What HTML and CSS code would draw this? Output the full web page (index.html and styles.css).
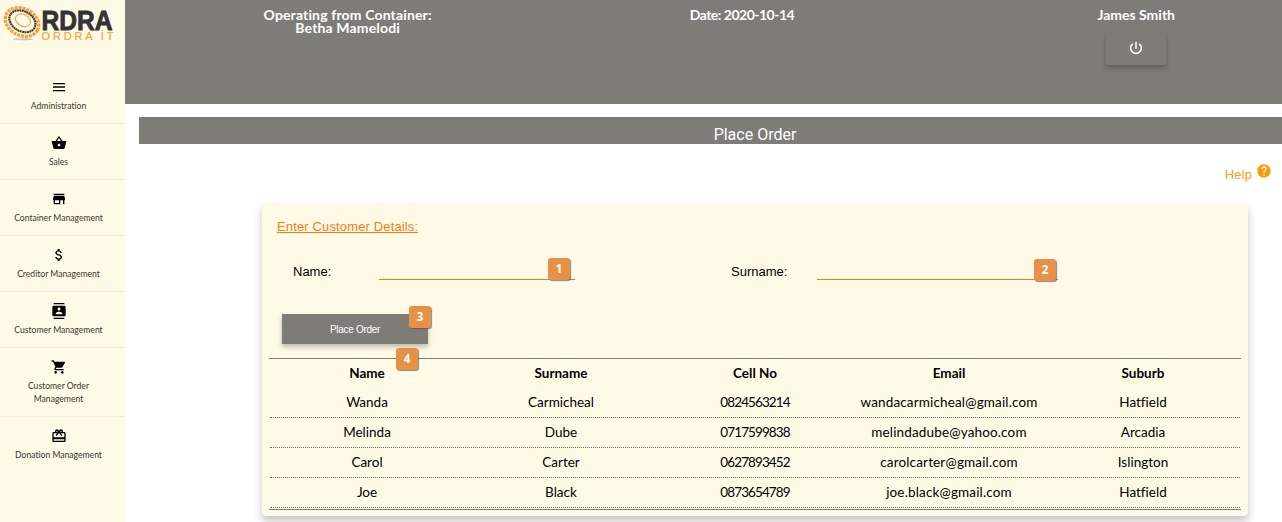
FILE: index.html
```html
<!DOCTYPE html>
<html lang="en">
<head>
<meta charset="utf-8">
<title>Ordra IT - Place Order</title>
<link rel="stylesheet" href="styles.css">
</head>
<body>
<div class="app">
  <aside class="sidebar">
    <svg class="logo" viewBox="0 0 125 68" width="125" height="68">
      <ellipse cx="23" cy="39.300" rx="10" ry="1" fill="#777" opacity=".4"/>
      <g fill="none" transform="rotate(28 22 22)">
        <ellipse cx="22" cy="22" rx="17.500" ry="13.300" stroke="#f9a23c" stroke-width="3.400" stroke-dasharray="3 .9"/>
        <ellipse cx="22" cy="21.200" rx="13.800" ry="10" stroke="#4a453c" stroke-width="2.200" stroke-dasharray="2 .4"/>
        <ellipse cx="22" cy="20" rx="8" ry="5.800" stroke="#f9a84a" stroke-width="1.200"/>
      </g>
      <text class="logo-name" x="41.500" y="29.600" textLength="71" lengthAdjust="spacingAndGlyphs">RDRA</text>
      <text class="logo-sub" x="41.500" y="39.800" textLength="72">ORDRA İT</text>
    </svg>
    <nav>
      <a class="item"><svg class="icon" viewBox="0 0 16 16"><path d="M2 4h12v1.200H2zM2 7.200h12v1.600H2zM2 11h12v1.200H2z"/></svg><span>Administration</span></a>
      <a class="item"><svg class="icon" viewBox="0 0 24 24"><path d="M17.210 9l-4.380-6.560c-.19-.28-.51-.42-.83-.42-.32 0-.64.14-.83.43L6.790 9H2c-.55 0-1 .45-1 1 0 .09.010.18.040.27l2.540 9.270c.23.84 1 1.460 1.920 1.460h13c.92 0 1.690-.62 1.930-1.460l2.540-9.270L23 10c0-.55-.45-1-1-1h-4.790zM9 9l3-4.400L15 9H9zm3 8c-1.100 0-2-.9-2-2s.9-2 2-2 2 .9 2 2-.9 2-2 2z"/></svg><span>Sales</span></a>
      <a class="item"><svg class="icon" viewBox="0 0 24 24"><path d="M20 4H4v2h16V4zm1 10v-2l-1-5H4l-1 5v2h1v6h10v-6h4v6h2v-6h1zm-9 4H6v-4h6v4z"/></svg><span>Container Management</span></a>
      <a class="item"><svg class="icon" viewBox="0 0 24 24"><path d="M11.800 10.900c-2.270-.59-3-1.200-3-2.150 0-1.090 1.010-1.850 2.700-1.850 1.780 0 2.440.85 2.500 2.100h2.210c-.07-1.720-1.120-3.300-3.210-3.810V3h-3v2.160c-1.940.42-3.500 1.680-3.500 3.610 0 2.310 1.910 3.460 4.700 4.130 2.500.6 3 1.480 3 2.410 0 .69-.49 1.790-2.700 1.790-2.060 0-2.870-.92-2.980-2.100h-2.200c.12 2.190 1.760 3.420 3.680 3.830V21h3v-2.150c1.950-.37 3.500-1.500 3.500-3.550 0-2.840-2.430-3.810-4.700-4.400z"/></svg><span>Creditor Management</span></a>
      <a class="item"><svg class="icon" viewBox="0 0 24 24"><path d="M20 0H4v2h16V0zM4 24h16v-2H4v2zM20 4H4c-1.100 0-2 .9-2 2v12c0 1.100.9 2 2 2h16c1.100 0 2-.9 2-2V6c0-1.100-.9-2-2-2zm-8 2.750c1.240 0 2.250 1.010 2.250 2.250s-1.010 2.250-2.250 2.250S9.750 10.240 9.750 9 10.760 6.750 12 6.750zM17 17H7v-1.500c0-1.670 3.330-2.500 5-2.500s5 .83 5 2.500V17z"/></svg><span>Customer Management</span></a>
      <a class="item"><svg class="icon" viewBox="0 0 24 24"><path d="M7 18c-1.100 0-1.990.9-1.990 2S5.900 22 7 22s2-.9 2-2-.9-2-2-2zM1 2v2h2l3.600 7.590-1.350 2.450c-.16.28-.25.61-.25.960 0 1.100.9 2 2 2h12v-2H7.420c-.14 0-.25-.11-.25-.25l.03-.12.900-1.630h7.450c.75 0 1.410-.41 1.750-1.030l3.580-6.490c.08-.14.120-.31.120-.48 0-.55-.45-1-1-1H5.210l-.94-2H1zm16 16c-1.100 0-1.990.9-1.990 2s.89 2 1.990 2 2-.9 2-2-.9-2-2-2z"/></svg><span>Customer Order<br>Management</span></a>
      <a class="item"><svg class="icon" viewBox="0 0 24 24"><path d="M20 6h-2.180c.11-.31.180-.65.180-1 0-1.660-1.340-3-3-3-1.050 0-1.960.54-2.500 1.350l-.5.670-.5-.68C10.960 2.540 10.050 2 9 2 7.340 2 6 3.340 6 5c0 .35.070.69.180 1H4c-1.110 0-1.990.89-1.990 2L2 19c0 1.110.89 2 2 2h16c1.110 0 2-.89 2-2V8c0-1.110-.89-2-2-2zm-5-2c.55 0 1 .45 1 1s-.45 1-1 1-1-.45-1-1 .45-1 1-1zM9 4c.55 0 1 .45 1 1s-.45 1-1 1-1-.45-1-1 .45-1 1-1zm11 15H4v-2h16v2zm0-5H4V8h5.080L7 10.830 8.620 12 11 8.760l1-1.360 1 1.360L15.380 12 17 10.830 14.920 8H20v6z"/></svg><span>Donation Management</span></a>
    </nav>
  </aside>
  <div class="page">
    <header class="topbar">
      <div class="place">Operating from Container:<br>Betha Mamelodi</div>
      <div class="date">Date: 2020-10-14</div>
      <div class="user">James Smith
        <button class="power" aria-label="Log out"><svg viewBox="0 0 24 24" width="16" height="16"><path fill="#fff" stroke="#fff" stroke-width=".3" d="M13 3h-2v10h2V3zm4.830 2.170l-1.420 1.420C17.990 7.860 19 9.810 19 12c0 3.870-3.130 7-7 7s-7-3.130-7-7c0-2.190 1.010-4.140 2.580-5.420L6.170 5.170C4.230 6.820 3 9.260 3 12c0 4.970 4.030 9 9 9s9-4.030 9-9c0-2.740-1.230-5.180-3.170-6.830z"/></svg></button>
      </div>
    </header>
    <h1 class="title">Place Order</h1>
    <div class="help"><span>Help</span><svg viewBox="0 0 24 24" width="16" height="16"><path fill="#fb9b0a" d="M12 2C6.480 2 2 6.480 2 12s4.480 10 10 10 10-4.480 10-10S17.520 2 12 2zm1 17h-2v-2h2v2zm2.070-7.750l-.9.920C13.450 12.900 13 13.500 13 15h-2v-.5c0-1.100.45-2.100 1.170-2.830l1.240-1.260c.37-.36.590-.86.590-1.410 0-1.100-.9-2-2-2s-2 .9-2 2H8c0-2.210 1.790-4 4-4s4 1.790 4 4c0 .88-.36 1.680-.93 2.250z"/></svg></div>
    <main class="card">
      <h2 class="heading">Enter Customer Details:</h2>
      <div class="fields">
        <label class="label-name">Name:</label>
        <div class="line"><b class="badge badge-1">1</b></div>
        <label class="label-surname">Surname:</label>
        <div class="line"><b class="badge badge-2">2</b></div>
      </div>
      <button class="submit">Place Order<b class="badge badge-3">3</b></button>
      <div class="table">
        <b class="badge badge-4">4</b>
        <div class="row head"><span>Name</span><span>Surname</span><span>Cell No</span><span>Email</span><span>Suburb</span></div>
        <div class="row"><span>Wanda</span><span>Carmicheal</span><span class="cell">0824563214</span><span class="email">wandacarmicheal@gmail.com</span><span>Hatfield</span></div>
        <div class="row"><span>Melinda</span><span>Dube</span><span class="cell">0717599838</span><span class="email">melindadube@yahoo.com</span><span>Arcadia</span></div>
        <div class="row"><span>Carol</span><span>Carter</span><span class="cell">0627893452</span><span class="email">carolcarter@gmail.com</span><span>Islington</span></div>
        <div class="row"><span>Joe</span><span>Black</span><span class="cell">0873654789</span><span class="email">joe.black@gmail.com</span><span>Hatfield</span></div>
      </div>
    </main>
  </div>
</div>
</body>
</html>
```
FILE: styles.css
```css
* { box-sizing: border-box; }
body { margin: 0; background: #fff; overflow: hidden; font-family: Lato, sans-serif; font-variant-ligatures: none; }
.app { display: flex; height: 522px; }

.sidebar { width: 125px; flex: none; background: #fffae6; }
.logo { display: block; }
.logo-name { font: bold 28px "Liberation Sans", sans-serif; fill: #333; stroke: #333; stroke-width: .9px; }
.logo-sub { font: 11px "Liberation Sans", sans-serif; fill: #f9a23c; stroke: #f9a23c; stroke-width: .2px; }
.item { display: flex; flex-direction: column; align-items: center; gap: 5px; padding: 11px 8px 10px 0; border-bottom: 1px solid #f3ecdc; font-size: 8.600px; line-height: 13px; text-align: center; color: #383630; }
.item:last-child { border-bottom: 0; }
.icon { width: 16px; height: 16px; fill: #000; }

.page { flex: 1; min-width: 0; }
.topbar { display: grid; grid-template-columns: repeat(3, 394.3px); height: 104px; padding: 8px 0 0 25.500px; background: #7e7c77; overflow: hidden; color: #fff; font-weight: bold; font-size: 14px; line-height: 13px; text-align: center; }
.place { letter-spacing: .15px; }
.date { letter-spacing: -.5px; }
.user { display: flex; flex-direction: column; align-items: center; }
.power { width: 60px; height: 30px; margin-top: 14px; padding: 0 0 4px; border: 0; background: #7e7c77; box-shadow: 0 3px 5px rgba(0,0,0,.24); }
.power svg { display: block; margin: 0 auto; }
.title { height: 27px; margin: 13px 0 0 14px; padding: 4px 0 0 89px; background: #7e7c77; color: #fff; font: 16px/27px Roboto, sans-serif; text-align: center; }
.help { display: flex; justify-content: flex-end; gap: 4px; height: 60px; padding: 19px 10px 0 0; color: #fb9b1f; font: 13px/23px "Liberation Sans", sans-serif; letter-spacing: .1px; }

.card { width: 986px; height: 312px; margin-left: 137px; padding: 0 7px; border-radius: 4px; background: #fffae6; box-shadow: 0 5px 8px rgba(0,0,0,.24); }
.heading { margin: 0; padding: 14px 0 0 8px; color: #f57c13; font: 13px/17px "Liberation Sans", sans-serif; letter-spacing: .14px; text-decoration: underline; }
.fields { display: grid; grid-template-columns: 86px 196px 156px 86px 241px; padding: 25px 0 0 24px; height: 79px; font: 13px/22px "Liberation Sans", sans-serif; }
.fields label { padding-top: 1px; }
.fields .line { position: relative; height: 20px; border-bottom: 1px solid #ef7d1c; }
.label-surname { grid-column: 4; }
.submit { position: relative; display: block; width: 146px; height: 30px; margin-left: 13px; border: 0; background: #7e7c77; color: #fff; font: 10px "Liberation Sans", sans-serif; letter-spacing: -.3px; box-shadow: 0 3px 5px rgba(0,0,0,.25); }
.badge { position: absolute; width: 22px; height: 22px; border-radius: 3px; background: #e79148; color: #fff; font: bold 11.500px/22px "Open Sans", sans-serif; letter-spacing: 0; text-align: center; box-shadow: 1px 1px 1px rgba(80,80,80,.65); }
.badge-1 { left: 169px; top: -2px; }
.badge-2 { left: 217px; top: -1px; }
.badge-3 { left: 127px; top: -8px; }
.badge-4 { left: 127px; top: -11px; }

.table { position: relative; margin-top: 14px; height: 152px; border: 1px solid #7e7c77; border-width: 1px 0; padding: 0 1px; }
.row { display: grid; grid-template-columns: repeat(5, 1fr); height: 30px; border-bottom: 1px dotted #6c6a65; font-size: 13.500px; line-height: 28px; text-align: center; }
.head { height: 29px; border: 0; font-weight: bold; }
.cell { letter-spacing: -.9px; }
.email { letter-spacing: .15px; }
```
